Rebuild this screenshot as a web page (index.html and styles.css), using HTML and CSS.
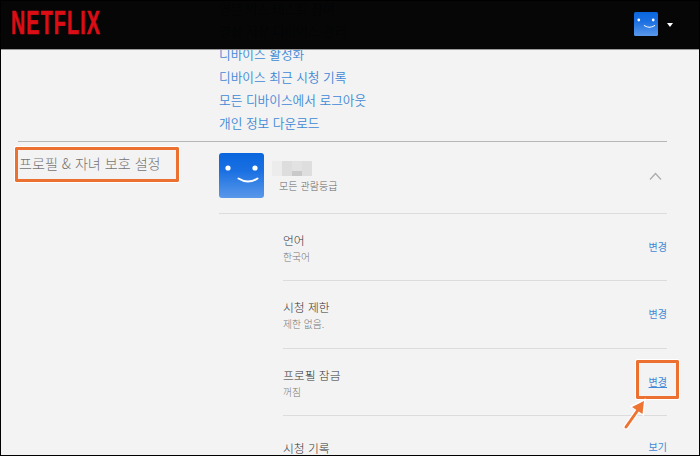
FILE: index.html
```html
<!DOCTYPE html>
<html lang="ko">
<head>
<meta charset="utf-8">
<title>계정</title>
<link rel="stylesheet" href="styles.css">
</head>
<body>
<div class="frame">
  <header class="top">
    <span class="logo">NETFLIX</span>
    <div class="top-right">
      <svg class="avatar-small" width="24" height="24" viewBox="0 0 45 45"><use href="#face"/></svg>
      <span class="caret"></span>
    </div>
  </header>

  <ul class="links">
    <li><a>영문 박스 테스트 참여</a></li>
    <li><a>영상 저장 디바이스 관리</a></li>
    <li><a>디바이스 활성화</a></li>
    <li><a>디바이스 최근 시청 기록</a></li>
    <li><a>모든 디바이스에서 로그아웃</a></li>
    <li><a>개인 정보 다운로드</a></li>
  </ul>

  <section class="section">
    <h2 class="section-title">프로필 &amp; 자녀 보호 설정</h2>
    <div class="section-body">
      <div class="profile">
        <svg class="avatar" width="45" height="45" viewBox="0 0 45 45">
          <defs>
            <linearGradient id="blue" x1="0" y1="0" x2="0" y2="1">
              <stop offset="0" stop-color="#0a66de"/>
              <stop offset="0.4" stop-color="#1a70e2"/>
              <stop offset="1" stop-color="#5a98ea"/>
            </linearGradient>
            <g id="face">
              <rect width="45" height="45" rx="3" fill="url(#blue)"/>
              <circle cx="9" cy="15" r="2.6" fill="#fff"/>
              <circle cx="36" cy="15" r="2.6" fill="#fff"/>
              <path d="M19.500 25.500 Q29 31.500 38.500 25.500" fill="none" stroke="#fff" stroke-width="2" stroke-linecap="round"/>
            </g>
          </defs>
          <use href="#face"/>
        </svg>
        <div class="who">
          <svg class="mosaic" width="40" height="15" viewBox="0 0 40 15">
            <rect width="10" height="15" fill="#ececec"/>
            <rect x="10" width="10" height="15" fill="#dddddd"/>
            <rect x="20" width="10" height="10" fill="#e2e2e2"/>
            <rect x="20" y="10" width="10" height="5" fill="#c9c9c9"/>
            <rect x="30" width="10" height="15" fill="#dedede"/>
          </svg>
          <div class="rating">모든 관람등급</div>
        </div>
        <svg class="chevron" width="13" height="8" viewBox="0 0 13 8"><path d="M1 7.500 L6.500 1.500 L12 7.500" fill="none" stroke="#adadad" stroke-width="1.300"/></svg>
      </div>

      <div class="rows">
        <div class="row">
          <div><div class="row-title">언어</div><div class="row-sub">한국어</div></div>
          <a class="action">변경</a>
        </div>
        <div class="row">
          <div><div class="row-title">시청 제한</div><div class="row-sub">제한 없음.</div></div>
          <a class="action">변경</a>
        </div>
        <div class="row">
          <div><div class="row-title">프로필 잠금</div><div class="row-sub">꺼짐</div></div>
          <a class="action action-under">변경</a>
        </div>
        <div class="row row-last">
          <div><div class="row-title">시청 기록</div></div>
          <a class="action">보기</a>
        </div>
      </div>
    </div>
  </section>

  <div class="mark mark-label"></div>
  <div class="mark mark-action"></div>
  <svg class="arrow" width="26" height="32" viewBox="0 0 26 32">
    <path d="M3 29 L15 12" stroke="#fff" stroke-width="5" stroke-linecap="round"/>
    <path d="M8.500 8.500 L21.500 2 L20 16.500 Z" fill="#fff" stroke="#fff" stroke-width="2"/>
    <path d="M3 29 L15 12" stroke="#ee7433" stroke-width="3" stroke-linecap="round"/>
    <path d="M9 9 L21 3 L19.500 16 Z" fill="#ee7433"/>
  </svg>
</div>
</body>
</html>
```
FILE: styles.css
```css
* { box-sizing: border-box; }
html, body { margin: 0; padding: 0; background: #000; }
body { font-family: "Noto Sans CJK KR", "Noto Sans", sans-serif; }

.frame {
  position: relative;
  width: 700px;
  height: 456px;
  overflow: hidden;
  border: 1px solid #000;
  background: #f3f3f3;
  padding: 0 32px 0 17px;
}

.top {
  position: absolute;
  z-index: 2;
  top: -1px;
  left: 0;
  right: 0;
  height: 50px;
  background: rgba(0, 0, 0, 0.975);
  border-bottom: 1px solid #9a9a9a;
  display: flex;
  align-items: center;
  justify-content: space-between;
  padding: 0 26px 0 10px;
}
.logo {
  display: block;
  margin-top: -4px;
  font-family: "Liberation Sans", sans-serif;
  font-weight: 700;
  font-size: 33px;
  line-height: 33px;
  letter-spacing: 2px;
  color: #db0d15;
  -webkit-text-stroke: 0.6px #db0d15;
  transform: scaleX(0.595);
  transform-origin: left center;
}
.top-right { display: flex; align-items: center; gap: 9px; }
.avatar-small { display: block; margin-top: -1px; }
.caret {
  width: 0;
  height: 0;
  border-left: 3.5px solid transparent;
  border-right: 3.5px solid transparent;
  border-top: 4px solid #fff;
}

.links {
  list-style: none;
  margin: 0;
  padding: 0 0 7px 201px;
}
.links li {
  height: 23px;
  line-height: 23px;
  font-size: 12.700px;
  font-weight: 350;
  color: #4189d6;
  white-space: nowrap;
}
.links li:first-child {
  height: 15px;
  line-height: 15px;
  margin-bottom: 3px;
}

.section {
  display: grid;
  grid-template-columns: 201px 1fr;
  border-top: 1px solid #b6b6b6;
}
.section-title {
  margin: 10px 0 0 1px;
  font-size: 14.100px;
  line-height: 22px;
  font-weight: 300;
  color: #757575;
  white-space: nowrap;
}

.profile {
  display: flex;
  align-items: center;
  height: 72px;
  padding: 11px 0 15px;
  border-bottom: 1px solid #dcdcdc;
}
.avatar { display: block; flex: none; }
.who { margin-left: 8px; margin-top: 4px; }
.mosaic { display: block; margin-top: -1px; }
.rating {
  margin: 2px 0 0 7px;
  font-size: 10.100px;
  line-height: 16px;
  font-weight: 300;
  color: #666;
  white-space: nowrap;
}
.chevron { margin-left: auto; margin-right: 5px; display: block; }

.rows { margin-top: -0.500px; }
.row {
  height: 67.500px;
  margin-left: 64px;
  padding-top: 17px;
  border-bottom: 1px solid #dcdcdc;
  display: flex;
  justify-content: space-between;
  align-items: flex-start;
}
.row-last { border-bottom: 0; padding-top: 23px; }
.row-title {
  font-size: 11.800px;
  line-height: 18px;
  color: #333;
  font-weight: 300;
  white-space: nowrap;
}
.row-sub {
  font-size: 9.800px;
  line-height: 16px;
  color: #777;
  font-weight: 300;
  white-space: nowrap;
}
.action {
  font-size: 10px;
  line-height: 14px;
  margin-top: 9px;
  color: #4189d6;
  white-space: nowrap;
}
.row-last .action { margin-top: 1px; }
.action-under { text-decoration: underline; }

.mark {
  position: absolute;
  z-index: 3;
  border: 3px solid #ec7030;
  outline: 1px solid #fff;
  border-radius: 1px;
}
.mark-label { left: 14px; top: 146px; width: 164px; height: 35px; }
.mark-action { left: 635px; top: 359px; width: 43px; height: 39px; }
.arrow { position: absolute; z-index: 3; left: 622px; top: 397px; }
```
